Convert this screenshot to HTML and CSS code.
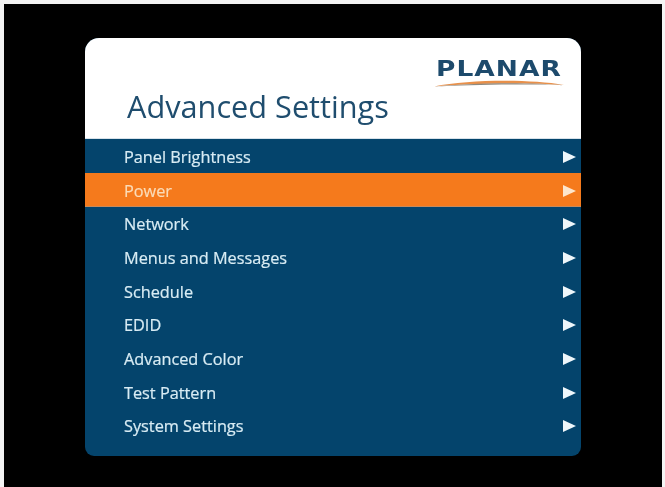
FILE: index.html
```html
<!DOCTYPE html>
<html lang="en">
<head>
<meta charset="utf-8">
<title>Advanced Settings</title>
<link rel="stylesheet" href="styles.css">
</head>
<body>
<main class="screen">
  <section class="panel">
    <header class="head">
      <div class="logo">
        <span class="logo-word">PLANAR</span>
        <svg class="logo-swoosh" viewBox="0 0 130 8" aria-hidden="true">
          <path d="M0 7.5 C35 0.5 95 0 130 6 C95 3.5 35 4 0 7.5Z" fill="#e8904a"/>
          <path d="M0 7.8 C35 3.5 95 3 130 6.2 C95 5 35 5.5 0 7.8Z" fill="#8f8a80"/>
        </svg>
      </div>
      <h1 class="title">Advanced Settings</h1>
    </header>
    <ul class="menu">
      <li class="row"><span>Panel Brightness</span><i class="arrow"></i></li>
      <li class="row active"><span>Power</span><i class="arrow"></i></li>
      <li class="row"><span>Network</span><i class="arrow"></i></li>
      <li class="row"><span>Menus and Messages</span><i class="arrow"></i></li>
      <li class="row"><span>Schedule</span><i class="arrow"></i></li>
      <li class="row"><span>EDID</span><i class="arrow"></i></li>
      <li class="row"><span>Advanced Color</span><i class="arrow"></i></li>
      <li class="row"><span>Test Pattern</span><i class="arrow"></i></li>
      <li class="row"><span>System Settings</span><i class="arrow"></i></li>
    </ul>
  </section>
</main>
</body>
</html>
```
FILE: styles.css
```css
html, body {
  margin: 0;
  height: 100%;
  background: #f4f4f4;
  overflow: hidden;
}
.screen {
  box-sizing: border-box;
  height: 483px;
  margin: 4px 3px 0 4px;
  padding: 34px 81px 0 81px;
  background: #000;
  font-family: "Open Sans", "Liberation Sans", sans-serif;
}
.panel {
  height: 418px;
  border-radius: 14px 14px 9px 9px;
  overflow: hidden;
  background: #04446c;
  display: flex;
  flex-direction: column;
  filter: blur(0.45px);
}
.head {
  height: 101px;
  flex: none;
  box-sizing: border-box;
  background: #fff;
  padding: 21px 17px 0 42px;
  border-bottom: 1px solid #d8e2ea;
}
.logo {
  width: 130px;
  margin-left: auto;
  display: flex;
  flex-direction: column;
  align-items: center;
}
.logo-word {
  display: inline-block;
  font-family: "DejaVu Sans", sans-serif;
  font-weight: 700;
  font-size: 21px;
  line-height: 20px;
  letter-spacing: 0.8px;
  color: #1d4a6c;
  transform: scaleX(1.26);
}
.logo-swoosh {
  display: block;
  width: 130px;
  height: 8px;
  margin-top: 0;
}
.title {
  margin: -1px 0 0;
  font-weight: 400;
  font-size: 30.7px;
  line-height: 40px;
  color: #1f4d6e;
}
.menu {
  list-style: none;
  margin: 0;
  padding: 0;
}
.row {
  height: 33.65px;
  display: flex;
  align-items: center;
  justify-content: space-between;
  box-sizing: border-box;
  padding: 2px 5px 0 39px;
  color: #d8ecf4;
  font-size: 16.3px;
  -webkit-text-stroke: 0.2px #d8ecf4;
}
.row.active {
  height: 34px;
  background: #f57a1c;
  color: #fbdcb8;
  -webkit-text-stroke: 0.2px #fbdcb8;
  box-shadow: inset 0 -1px 0 #c98a5a;
}
.arrow {
  width: 0;
  height: 0;
  border-style: solid;
  border-width: 6.5px 0 6.5px 13px;
  border-color: transparent transparent transparent #eef6fa;
}
.row.active .arrow {
  border-left-color: #fde6cc;
}
```
